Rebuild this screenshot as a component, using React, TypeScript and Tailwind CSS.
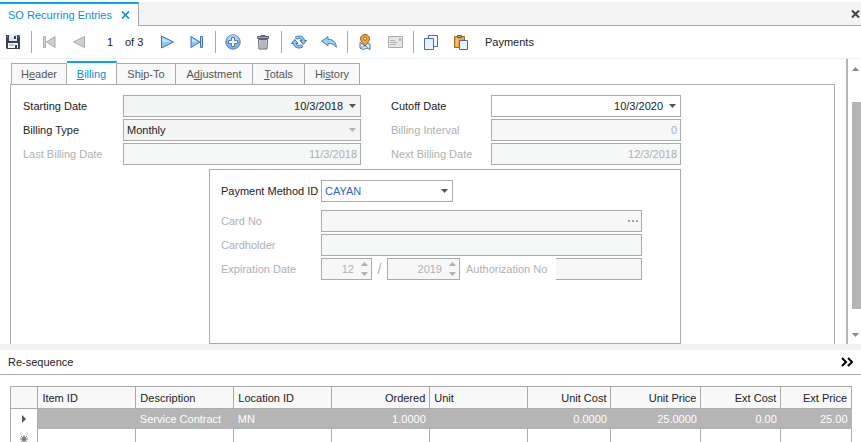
import type { ReactNode } from "react";
import clsx from "clsx";

const tabs = [
  { before: "H", key: "e", after: "ader", width: "w-[56px]" },
  { before: "", key: "B", after: "illing", width: "w-[50px]", active: true },
  { before: "Sh", key: "i", after: "p-To", width: "w-[59px]" },
  { before: "A", key: "d", after: "justment", width: "w-[77px]" },
  { before: "", key: "T", after: "otals", width: "w-[52px]" },
  { before: "Hi", key: "s", after: "tory", width: "w-[55px]" },
];

const columns = [
  { name: "Item ID", value: "", width: "w-[11.65%]" },
  { name: "Description", value: "Service Contract", width: "w-[11.65%]" },
  { name: "Location ID", value: "MN", width: "w-[11.65%]" },
  { name: "Ordered", value: "1.0000", width: "w-[11.65%]", right: true },
  { name: "Unit", value: "", width: "w-[11.65%]" },
  { name: "Unit Cost", value: "0.0000", width: "w-[9.9%]", right: true },
  { name: "Unit Price", value: "25.0000", width: "w-[10.7%]", right: true },
  { name: "Ext Cost", value: "0.00", width: "w-[9.5%]", right: true },
  { name: "Ext Price", value: "25.00", width: "w-[8.4%]", right: true },
];

const Caret = ({ className = "" }: { className?: string }) => (
  <svg width="7" height="4" viewBox="0 0 7 4" className={className}>
    <path d="M0 0h7L3.5 4z" fill="currentColor" />
  </svg>
);

const CaretUp = () => (
  <svg width="7" height="4" viewBox="0 0 7 4">
    <path d="M0 4h7L3.5 0z" fill="currentColor" />
  </svg>
);

const SaveIcon = () => (
  <svg width="16" height="16" viewBox="0 0 16 16">
    <path d="M1 1h13l1 1v13H2l-1-1z" fill="#3a4250" />
    <path d="M4 1h8v6H4z" fill="#dfe6ef" />
    <path d="M9 2h2v3H9z" fill="#3a4250" />
    <path d="M3 9h10v5H3z" fill="#f4f6fa" />
    <path d="M4 11h5" stroke="#8792a4" />
    <path d="M10 11h2v3h-2z" fill="#3a4250" />
    <path d="M2 3h1M13 3h1" stroke="#8fa6c8" />
  </svg>
);

const FirstIcon = () => (
  <svg width="14" height="14" viewBox="0 0 14 14">
    <path d="M1.500 1.500h2v11h-2z" fill="#dcdcdc" stroke="#a9a9a9" />
    <path d="M13 1.500v11L4.500 7z" fill="#cfcfcf" stroke="#a9a9a9" strokeLinejoin="round" />
  </svg>
);

const PrevIcon = () => (
  <svg width="14" height="14" viewBox="0 0 14 14">
    <path d="M12.500 1.500v11L1.500 7z" fill="#cfcfcf" stroke="#a9a9a9" strokeLinejoin="round" />
  </svg>
);

const NextIcon = () => (
  <svg width="14" height="14" viewBox="0 0 14 14">
    <path d="M1.500 1v12l12-6z" fill="#8fc6f5" stroke="#3f74bd" strokeLinejoin="round" />
    <path d="M2.500 3v4h8z" fill="#c9e5fb" />
  </svg>
);

const LastIcon = () => (
  <svg width="14" height="14" viewBox="0 0 14 14">
    <path d="M1 1.500v11L10 7z" fill="#8fc6f5" stroke="#3f74bd" strokeLinejoin="round" />
    <path d="M2 3.500V7h5.500z" fill="#c9e5fb" />
    <path d="M10.500 1.500h2v11h-2z" fill="#b4dafa" stroke="#3f74bd" />
  </svg>
);

const AddIcon = () => (
  <svg width="16" height="16" viewBox="0 0 16 16">
    <circle cx="8" cy="8" r="7.200" fill="#7fb7ea" stroke="#5a7fae" />
    <path d="M2 7a6 6 0 0 1 12 0z" fill="#a9d3f5" />
    <path d="M6.500 3.500h3v3h3v3h-3v3h-3v-3h-3v-3h3z" fill="#fff" stroke="#4b7cbd" />
  </svg>
);

const TrashIcon = () => (
  <svg width="14" height="16" viewBox="0 0 14 16">
    <path d="M5 2.500v-1h4v1" fill="none" stroke="#5d636f" />
    <path d="M1.500 2.500h11v2h-11z" fill="#a2a7b0" stroke="#5d636f" />
    <path d="M2.500 5.500h9l-.5 9.500H3z" fill="#dcdfe4" stroke="#5d636f" />
    <path d="M5 6v8.500M7 6v8.500M9 6v8.500" stroke="#8b919c" />
  </svg>
);

const RefreshIcon = () => (
  <svg width="16" height="14" viewBox="0 0 16 14">
    <g fill="#8fcaf3" stroke="#2f66a8" strokeWidth=".9" strokeLinejoin="round">
      <path d="M4 2.500C7-.1 12.500.4 13.500 5.500h2L12.200 9.500 9 5.500h1.900C10 3.200 8 2.700 6.200 4.200z" />
      <path d="M12 11.500C9 14.100 3.500 13.600 2.500 8.500h-2L3.800 4.500 7 8.500H5.100C6 10.800 8 11.300 9.800 9.800z" />
    </g>
  </svg>
);

const UndoIcon = () => (
  <svg width="16" height="12" viewBox="0 0 16 12">
    <path d="M.7 5L7 .7v2.600c5 .1 8.200 3 8.300 8C13.500 8.500 11 7.300 7 7.400V10z" fill="#9ad0f2" stroke="#4383b4" strokeLinejoin="round" />
  </svg>
);

const MapPinIcon = () => (
  <svg width="12" height="16" viewBox="0 0 12 16">
    <path d="M1 8.500l3.500 2L8 8.500l3 1.500v5.500l-3-1.500-3.500 1.500L1 14z" fill="#d7ecfb" stroke="#4b6fae" />
    <path d="M2 14l7-5M5 10l5 5" stroke="#7ba3cf" />
    <path d="M6 .5c2.700 0 4.500 1.900 4.500 4.200C10.500 7.500 7.500 9 6 12.500 4.500 9 1.500 7.500 1.500 4.700 1.500 2.400 3.300.5 6 .5z" fill="#f5a93c" stroke="#99591a" />
    <circle cx="6" cy="4.700" r="1.600" fill="#fff3d8" stroke="#8b4c12" strokeWidth=".8" />
  </svg>
);

const MailIcon = () => (
  <svg width="15" height="12" viewBox="0 0 15 12">
    <path d="M.5.5h14v11H.5z" fill="#e6e6e6" stroke="#ababab" />
    <path d="M2 4.500h5M2 6.500h7M2 8.500h6" stroke="#b5b5b5" />
    <path d="M11.500 2.500h1v2h-1z" fill="#d0d0d0" stroke="#aaa" />
  </svg>
);

const CopyIcon = () => (
  <svg width="14" height="15" viewBox="0 0 14 15">
    <path d="M4.500.5h9v11h-9z" fill="#f3f8ff" stroke="#5269ad" />
    <path d="M.5 3.500h9v11h-9z" fill="#eaf3fd" stroke="#5269ad" />
  </svg>
);

const PasteIcon = () => (
  <svg width="14" height="15" viewBox="0 0 14 15">
    <path d="M.5 1.500h10v11H.5z" fill="#eba83c" stroke="#a8681c" />
    <path d="M2.500 2.500h1v9h-1z" fill="#f9d387" />
    <path d="M3.500.5h4v2h-4z" fill="#a5b0c4" stroke="#4f5c78" />
    <path d="M5.500 5.500h8v9h-8z" fill="#eaf3fd" stroke="#4c69ac" />
  </svg>
);

const ToolButton = ({ label, disabled, children }: { label: string; disabled?: boolean; children: ReactNode }) => (
  <button type="button" aria-label={label} disabled={disabled} className="flex h-5 w-4 items-center justify-center">
    {children}
  </button>
);

const ToolGroup = ({ children }: { children: ReactNode }) => (
  <div className="ml-2.5 flex h-[22px] items-center gap-3.5 border-l border-[#a9a9a9] pl-[9px]">
    {children}
  </div>
);

const Toolbar = () => (
  <div className="flex h-[33px] shrink-0 items-center border-b border-[#edf2f4] pl-[5px]">
    <ToolButton label="Save"><SaveIcon /></ToolButton>
    <ToolGroup>
      <ToolButton label="First record" disabled><FirstIcon /></ToolButton>
      <ToolButton label="Previous record" disabled><PrevIcon /></ToolButton>
      <div className="flex items-center gap-1.5">
        <input aria-label="Record" defaultValue="1" className="w-[18px] bg-transparent text-center outline-none" />
        <span className="w-5 whitespace-nowrap">of 3</span>
      </div>
      <ToolButton label="Next record"><NextIcon /></ToolButton>
      <ToolButton label="Last record"><LastIcon /></ToolButton>
    </ToolGroup>
    <ToolGroup>
      <ToolButton label="Add"><AddIcon /></ToolButton>
      <ToolButton label="Delete"><TrashIcon /></ToolButton>
    </ToolGroup>
    <ToolGroup>
      <ToolButton label="Refresh"><RefreshIcon /></ToolButton>
      <ToolButton label="Undo"><UndoIcon /></ToolButton>
    </ToolGroup>
    <ToolGroup>
      <ToolButton label="Map"><MapPinIcon /></ToolButton>
      <ToolButton label="Email" disabled><MailIcon /></ToolButton>
    </ToolGroup>
    <ToolGroup>
      <ToolButton label="Copy"><CopyIcon /></ToolButton>
      <ToolButton label="Paste"><PasteIcon /></ToolButton>
    </ToolGroup>
    <button type="button" className="ml-4">Payments</button>
  </div>
);

const Label = ({ id, muted, className = "", children }: { id: string; muted?: boolean; className?: string; children: ReactNode }) => (
  <label htmlFor={id} className={clsx("whitespace-nowrap", muted && "text-[#b0b0b0]", className)}>
    {children}
  </label>
);

const box = "flex h-[22px] items-center border border-[#ababab]";

const TextField = ({ id, value = "", className = "" }: { id: string; value?: string; className?: string }) => (
  <div className={clsx(box, "bg-[#f6f7f7] text-[#b0b0b0]", className)}>
    <input id={id} disabled defaultValue={value} className="w-full min-w-0 px-[3px] text-right" />
  </div>
);

const DateField = ({ id, value, filled }: { id: string; value: string; filled?: boolean }) => (
  <div className={clsx(box, filled ? "bg-[#f3f4f4]" : "bg-white")}>
    <input id={id} defaultValue={value} className="w-full min-w-0 bg-transparent text-right outline-none" />
    <button type="button" aria-label="Open calendar" className="flex h-full w-[17px] shrink-0 items-center justify-center pl-0.5 text-[#555]">
      <Caret />
    </button>
  </div>
);

const Spinner = ({ id, value, label, className }: { id: string; value: string; label: string; className: string }) => (
  <div className={clsx(box, "bg-[#f6f7f7] text-[#b0b0b0]", className)}>
    <input id={id} aria-label={label} disabled defaultValue={value} className="w-full min-w-0 text-right" />
    <div className="flex h-full w-[17px] shrink-0 flex-col items-center justify-between py-[3px] pl-1">
      <button type="button" disabled aria-label="Increase" className="flex"><CaretUp /></button>
      <button type="button" disabled aria-label="Decrease" className="flex"><Caret /></button>
    </div>
  </div>
);

const PaymentBox = () => (
  <div className="ml-[186px] flex-1 border border-[#ababab] pt-2.5 pl-[11px]">
    <div className="grid grid-cols-[100px_321px] items-center gap-y-0.5">
      <Label id="method" className="mb-1.5">Payment Method ID</Label>
      <div className={clsx(box, "relative mb-1.5 w-[132px] bg-white")}>
        <select id="method" defaultValue="CAYAN" className="h-full w-full appearance-none pl-[3px] text-[#2f62e0] outline-none">
          <option>CAYAN</option>
        </select>
        <Caret className="pointer-events-none absolute right-1 text-[#555]" />
      </div>
      <Label id="card" muted>Card No</Label>
      <div className={clsx(box, "bg-[#f6f7f7] text-[#b0b0b0]")}>
        <input id="card" disabled className="w-full min-w-0 px-[3px]" />
        <button type="button" disabled aria-label="Card details" className="flex gap-0.5 px-[3px]">
          <span className="size-0.5 bg-[#a0a0a0]" />
          <span className="size-0.5 bg-[#a0a0a0]" />
          <span className="size-0.5 bg-[#a0a0a0]" />
        </button>
      </div>
      <Label id="holder" muted>Cardholder</Label>
      <TextField id="holder" />
      <Label id="month" muted>Expiration Date</Label>
      <div className="flex items-center text-[#b0b0b0]">
        <Spinner id="month" label="Expiration month" value="12" className="w-[51px]" />
        <span className="w-[15px] text-center text-sm">/</span>
        <Spinner id="year" label="Expiration year" value="2019" className="w-[73px]" />
        <div className="w-[96px] pl-1.5">
          <Label id="auth" muted>Authorization No</Label>
        </div>
        <TextField id="auth" className="flex-1 border-l-0" />
      </div>
    </div>
  </div>
);

const BillingForm = () => (
  <div className="flex min-h-0 flex-1 flex-col border border-b-0 border-[#ababab] pt-2.5 pl-3">
    <div className="flex w-[658px] flex-1 flex-col">
      <div className="mb-1 grid grid-cols-[100px_238px_130px_190px] items-center gap-y-0.5">
        <Label id="start">Starting Date</Label>
        <DateField id="start" value="10/3/2018" filled />
        <Label id="cutoff" className="pl-[30px]">Cutoff Date</Label>
        <DateField id="cutoff" value="10/3/2020" />
        <Label id="type">Billing Type</Label>
        <div className={clsx(box, "relative bg-[#f3f4f4]")}>
          <select id="type" disabled defaultValue="Monthly" className="h-full w-full appearance-none pl-[3px] text-[#222] opacity-100">
            <option>Monthly</option>
          </select>
          <Caret className="pointer-events-none absolute right-1 text-[#b5b5b5]" />
        </div>
        <Label id="interval" muted className="pl-[30px]">Billing Interval</Label>
        <TextField id="interval" value="0" />
        <Label id="last" muted>Last Billing Date</Label>
        <TextField id="last" value="11/3/2018" />
        <Label id="next" muted className="pl-[30px]">Next Billing Date</Label>
        <TextField id="next" value="12/3/2018" />
      </div>
      <PaymentBox />
    </div>
  </div>
);

const EntriesGrid = () => (
  <table className="w-full table-fixed border-collapse">
    <thead>
      <tr className="h-[22px] bg-[#f8f8f8]">
        <th className="w-[27px] border border-[#ababab]" />
        {columns.map((c) => (
          <th key={c.name} className={clsx("border border-[#ababab] px-1 font-normal", c.width, c.right ? "text-right" : "text-left")}>
            {c.name}
          </th>
        ))}
      </tr>
    </thead>
    <tbody>
      <tr className="h-5">
        <td className="border-x border-[#ababab]">
          <svg width="4" height="8" viewBox="0 0 4 8" className="mx-auto">
            <path d="M0 0v8l4-4z" fill="#555" />
          </svg>
        </td>
        {columns.map((c) => (
          <td key={c.name} className={clsx("bg-[#b5b5b5] px-1 whitespace-nowrap text-white", c.right ? "text-right" : "text-left")}>
            {c.value}
          </td>
        ))}
      </tr>
      <tr className="h-5">
        <td className="border-x border-[#ababab]">
          <svg width="8" height="8" viewBox="0 0 8 8" className="mx-auto" stroke="#666" fill="none">
            <path d="M4 0v8M0 4h8M1 1l6 6M7 1L1 7" strokeWidth=".8" />
            <circle cx="4" cy="4" r="2" strokeWidth=".8" />
          </svg>
        </td>
        {columns.map((c) => (
          <td key={c.name} className="border-x border-[#ababab]" />
        ))}
      </tr>
    </tbody>
  </table>
);

const App = () => (
  <div className="flex h-screen flex-col overflow-hidden bg-white font-['Liberation_Sans',Arial,sans-serif] text-[11px] leading-[14px] text-[#222]">
    <header className="flex h-[26px] shrink-0 pt-0.5">
      <div className="flex w-[139px] items-center border-t-2 border-r border-t-[#0aa5f0] border-r-[#ababab] pl-2 text-[#0a8fe0]">
        <span className="whitespace-nowrap">SO Recurring Entries</span>
        <button type="button" aria-label="Close tab" className="ml-auto flex pr-2">
          <svg width="9" height="8" viewBox="0 0 9 8">
            <path d="M1 .5l7 7M8 .5l-7 7" stroke="currentColor" strokeWidth="1.700" />
          </svg>
        </button>
      </div>
      <div className="flex flex-1 items-center justify-end border-b border-[#ababab] bg-[#f3f3f3] pr-px">
        <button type="button" aria-label="Close window" className="flex">
          <svg width="9" height="8" viewBox="0 0 9 8">
            <path d="M1 .5l7 7M8 .5l-7 7" stroke="#444" strokeWidth="2" />
          </svg>
        </button>
      </div>
    </header>
    <Toolbar />
    <main className="flex min-h-0 flex-1">
      <div className="flex min-w-0 flex-1 flex-col pt-0.5 pr-[11px] pl-2.5">
        <div role="tablist" className="flex h-[23px] shrink-0 items-end pl-px">
          {tabs.map((t) => (
            <button
              key={t.after}
              type="button"
              role="tab"
              aria-selected={!!t.active}
              className={clsx(
                t.width,
                t.active
                  ? "-mb-px h-6 border-t-2 border-r border-t-[#0aa5f0] border-r-[#ababab] bg-white pb-px text-[#0a8fe0]"
                  : "h-[21px] border-t border-r border-[#ababab] bg-[#f8f8f8] text-[#555] first:border-l"
              )}
            >
              {t.before}<u>{t.key}</u>{t.after}
            </button>
          ))}
        </div>
        <BillingForm />
      </div>
      <div className="flex w-[15px] shrink-0 flex-col items-end border-l-2 border-[#b5b5b5] pt-2 pb-[7px]">
        <button type="button" aria-label="Scroll up" className="flex pr-0.5 pb-[31px] text-[#888]"><CaretUp /></button>
        <div className="w-[9px] flex-1 bg-[#b5b5b5]" />
        <button type="button" aria-label="Scroll down" className="flex pt-6 pr-0.5 text-[#888]"><Caret /></button>
      </div>
    </main>
    <footer className="h-[98px] shrink-0">
      <div className="h-1.5 bg-[#f0f1f1]" />
      <div className="flex h-[25px] items-center justify-between border-b border-[#ababab] px-2">
        <button type="button">Re-sequence</button>
        <button type="button" aria-label="Expand">
          <svg width="12" height="10" viewBox="0 0 12 10">
            <path d="M1 1l4 4-4 4M7 1l4 4-4 4" fill="none" stroke="#000" strokeWidth="2" />
          </svg>
        </button>
      </div>
      <div className="pt-[11px] pr-[9px] pl-2.5">
        <EntriesGrid />
      </div>
    </footer>
  </div>
);

export default App;
